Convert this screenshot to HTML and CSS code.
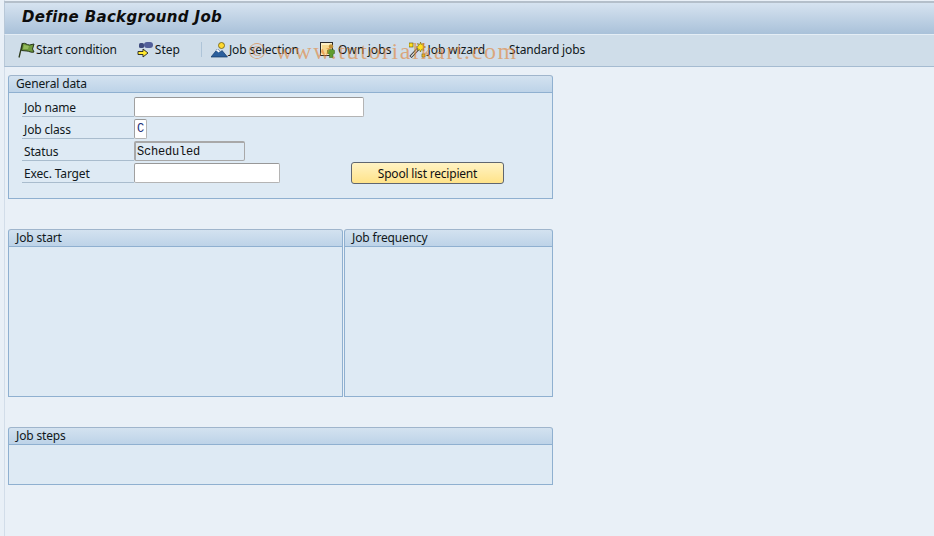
FILE: index.html
```html
<!DOCTYPE html>
<html lang="en">
<head>
<meta charset="utf-8">
<title>Define Background Job</title>
<link rel="stylesheet" href="styles.css">
</head>
<body>
<div class="screen">
  <header class="titlebar"><h1>Define Background Job</h1></header>
  <nav class="toolbar">
    <span class="tool tool-start">
      <svg class="icon" viewBox="0 0 18 16" width="18" height="16"><path d="M1 15.500 4.500 1" stroke="#2c3a1a" stroke-width="1.300" fill="none"/><path d="M4.500 1.500c3-1 4 1.500 7 1.500l4.500-1-1.500 5 1.500 3c-3 1-5-1-7-1l-5.500-.5z" fill="#6f9a3c" stroke="#26351a"/><path d="M6 3l5 1-1 3-5 0z" fill="#94bb5c"/></svg>
      <span>Start condition</span>
    </span>
    <span class="tool tool-step">
      <svg class="icon" viewBox="0 0 17 16" width="17" height="16"><rect x="2" y="1" width="5" height="5" rx="1.500" fill="#3d4a7d"/><rect x="7" y="0" width="9" height="6" rx="3" fill="#525f9a"/><path d="M1 9.500h5V7l5 4-5 4v-2.500H1z" fill="#ffe92e" stroke="#222" stroke-width=".9"/></svg>
      <span>Step</span>
    </span>
    <span class="tool-sep"></span>
    <span class="tool tool-sel">
      <svg class="icon" viewBox="0 0 17 16" width="17" height="16"><path d="M0 15 6.500 7l3 3 1.500-1.500 5.500 6.500z" fill="#2b5f9c" stroke="#123a68" stroke-width=".7"/><path d="M5 8.800 6.500 7l2.500 2.500-1.500 1-1-1z" fill="#fff"/><circle cx="10.500" cy="3.500" r="3" fill="#ffd92f" stroke="#6b5a10" stroke-width=".8"/></svg>
      <span>Job selection</span>
    </span>
    <span class="tool tool-own">
      <svg class="icon" viewBox="0 0 16 16" width="16" height="16"><rect x=".5" y=".5" width="12" height="13" fill="#fdf0c4" stroke="#2a2a2a"/><path d="M2 3h9v9H2z" fill="#f6d88e"/><circle cx="11" cy="4.500" r="2.200" fill="#c09038"/><path d="M7.500 8.500c0-1.500 7-1.500 7 0v3l-1.500.5v3.500H9.500V12l-2-.5z" fill="#5f9c2d" stroke="#33591a" stroke-width=".5"/></svg>
      <span>Own jobs</span>
    </span>
    <span class="tool tool-wiz">
      <svg class="icon" viewBox="0 0 17 16" width="17" height="16"><path d="M1.500 15 9 7" stroke="#333" stroke-width="3"/><path d="M2 14.500 8.500 7.500" stroke="#ddd" stroke-width="1.200"/><path d="M11.500 0l1 2.500L15 1.500l-1 2.500 2.500 1-2.500 1 1 2.500-2.500-1-1 2.500-1-2.500-2.500 1 1-2.500L7 5l2.500-1-1-2.500 2.500 1z" fill="#ffe01f" stroke="#5a4d00" stroke-width=".5"/><rect x="0" y="1" width="4" height="4" fill="#ffe01f" stroke="#5a4d00" stroke-width=".6"/><rect x="13" y="12" width="3" height="3" fill="#ffe01f" stroke="#5a4d00" stroke-width=".6"/></svg>
      <span>Job wizard</span>
    </span>
    <span class="tool tool-std"><span>Standard jobs</span></span>
    <span class="watermark">© www.tutorialkart.com</span>
  </nav>
  <main class="content">
    <section class="group group-general">
      <h2 class="group-head">General data</h2>
      <div class="group-body general-body">
        <label class="lbl">Job name</label><span class="input w-name"></span>
        <label class="lbl">Job class</label><span class="input w-class mono">C</span>
        <label class="lbl">Status</label><span class="input readonly w-status mono">Scheduled</span>
        <label class="lbl">Exec. Target</label><span class="input w-target"></span>
        <button class="btn" type="button">Spool list recipient</button>
      </div>
    </section>
    <div class="pair">
      <section class="group group-start">
        <h2 class="group-head">Job start</h2>
        <div class="group-body"></div>
      </section>
      <section class="group group-freq">
        <h2 class="group-head">Job frequency</h2>
        <div class="group-body"></div>
      </section>
    </div>
    <section class="group group-steps">
      <h2 class="group-head">Job steps</h2>
      <div class="group-body"></div>
    </section>
  </main>
</div>
</body>
</html>
```
FILE: styles.css
```css
* { box-sizing: border-box; }
html, body { margin: 0; padding: 0; height: 100%; overflow: hidden; }
body {
  background: #e9f0f7;
  font-family: "Noto Sans", "Open Sans", sans-serif;
  font-size: 12px;
  letter-spacing: -.15px;
  color: #101820;
}
.screen {
  width: 934px;
  height: 536px;
  padding-left: 4px;
  background: linear-gradient(to right, #e9f0f7 0, #e9f0f7 4px, #d2dde9 4px, #d2dde9 5px, #e9f0f7 5px);
  display: flex;
  flex-direction: column;
}
.titlebar {
  height: 33px;
  margin-top: 1px;
  border-top: 2px solid #b4bfca;
  border-left: 1px solid #b8c8d8;
  background: linear-gradient(to bottom, #d6e3f0, #a9c1d9);
  display: flex;
  align-items: center;
  padding-left: 17px;
}
.titlebar h1 {
  margin: 0;
  font-family: "DejaVu Sans", sans-serif;
  font-size: 15px;
  font-weight: 700;
  font-style: italic;
  letter-spacing: .33px;
  color: #0d0d0d;
  position: relative;
  top: -2px;
}
.toolbar {
  height: 33px;
  flex: none;
  position: relative;
  display: flex;
  align-items: center;
  padding-bottom: 2px;
  border-top: 1px solid #e4edf5;
  border-bottom: 1px solid #a5bbd1;
  border-left: 1px solid #b8c8d8;
  background: #cfdde9;
  white-space: nowrap;
}
.tool { display: flex; align-items: center; }
.icon { flex: none; display: block; }
.tool-start { margin-left: 13px; }
.tool-step { margin-left: 20px; gap: 1px; letter-spacing: 0; }
.tool-sep { width: 1px; height: 15px; background: #aec4d8; margin-left: 21px; }
.tool-sel { margin-left: 9px; gap: 1px; letter-spacing: -.1px; }
.tool-own { margin-left: 21px; gap: 2px; letter-spacing: .1px; }
.tool-wiz { margin-left: 17px; gap: 2px; letter-spacing: -.05px; }
.tool-std { margin-left: 24px; }
.watermark {
  position: absolute;
  left: 243px;
  top: 3px;
  font-family: "Liberation Serif", serif;
  font-size: 24px;
  letter-spacing: 1.600px;
  color: rgba(226, 130, 50, .6);
  pointer-events: none;
}
.content {
  padding: 8px 0 0 4px;
  display: flex;
  flex-direction: column;
  width: 549px;
}
.group { display: flex; flex-direction: column; }
.group-head {
  margin: 0;
  height: 18px;
  font-size: 12px;
  font-weight: 400;
  line-height: 16px;
  padding: 0 0 0 7px;
  border: 1px solid #8fb0d0;
  border-top-color: #9fb5cc;
  border-radius: 3px 3px 0 0;
  background: linear-gradient(to bottom, #d3e2f0, #bdd3e8);
}
.group-body {
  flex: 1;
  background: #deeaf4;
  border: 1px solid #8fb0d0;
  border-top: 0;
}
.group-general { height: 124px; }
.general-body {
  display: grid;
  grid-template-columns: 112px 217px 153px;
  grid-auto-rows: 20px;
  row-gap: 2px;
  padding: 4px 0 0 13px;
}
.lbl {
  grid-column: 1;
  border-bottom: 1px solid #a9bccd;
  padding-left: 2px;
  line-height: 21px;
}
.input {
  grid-column: 2;
  display: block;
  height: 20px;
  background: #fff;
  border: 1px solid #b4b4b4;
  border-top-color: #989898;
  border-left-color: #a0a0a0;
  border-radius: 2px;
  line-height: 19px;
  padding-left: 2px;
}
.mono { font-family: "Liberation Mono", monospace; font-size: 12px; letter-spacing: -.2px; color: #111; }
.readonly { background: #deeaf4; border-color: #a8a8a8; border-width: 2px 1px 1px 2px; line-height: 19px; padding-left: 1px; }
.w-name { width: 230px; grid-column: 2 / span 2; }
.w-class { width: 13px; padding-left: 2px; color: #1c2f7a; }
.w-status { width: 111px; }
.w-target { width: 146px; grid-row: 4; }
.btn {
  grid-column: 3;
  grid-row: 4;
  align-self: center;
  width: 153px;
  height: 22px;
  padding: 0;
  font: inherit;
  letter-spacing: -.2px;
  color: #111;
  border: 1px solid #5f6670;
  border-radius: 3px;
  background: linear-gradient(to bottom, #fff3c4, #ffe389);
}
.pair { display: flex; gap: 1px; margin-top: 30px; height: 168px; }
.group-start { width: 335px; }
.group-freq { width: 209px; }
.group-steps { height: 58px; margin-top: 30px; width: 545px; }
```
